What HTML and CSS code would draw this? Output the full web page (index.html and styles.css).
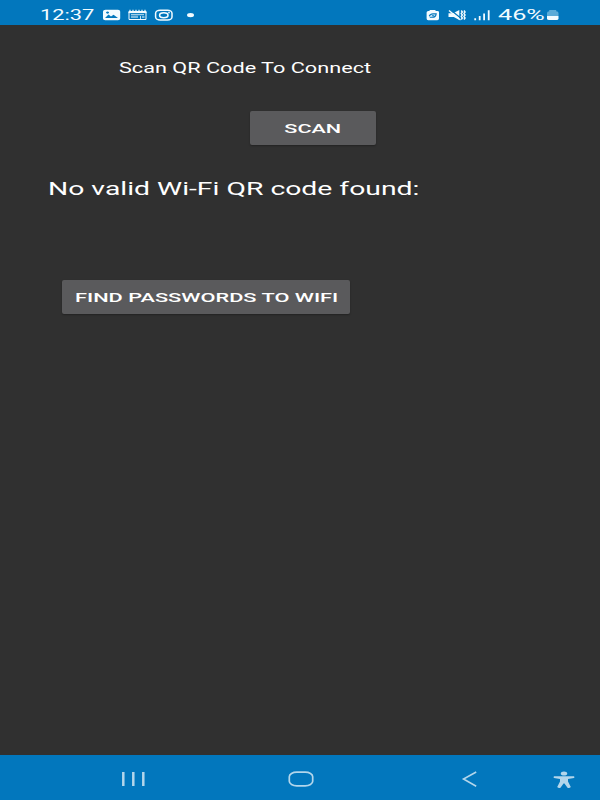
FILE: index.html
```html
<!DOCTYPE html>
<html lang="en">
<head>
<meta charset="utf-8">
<title>Wi-Fi QR Scanner</title>
<link rel="stylesheet" href="styles.css">
</head>
<body>
<div class="screen">
  <header class="status">
    <span class="clock"><span class="wide clock-text">12:37</span></span>
    <svg class="notices" width="100" height="25" viewBox="0 0 100 25" fill="none" stroke="#f2fbff">
      <path fill="#f2fbff" stroke="none" fill-rule="evenodd" d="M5.500 9.800h12.500q2.200 0 2.200 1.600v7.200q0 1.600-2.200 1.600H5.200q-2.200 0-2.200-1.600v-7.200q0-1.600 2.500-1.600zM5 18h13l-4.500-3.200-2.500 1.600-2.500-1.800zM7.500 11.500a1.500 1 0 1 0 .1 0z"/>
      <path d="M29 11.500h17v8H29z" stroke-width="1"/>
      <path d="M28.500 12.300h18" stroke-width="1.600"/>
      <path d="M30 9.800v1.500M33 9.800v1.500M36 9.800v1.500M39 9.800v1.500M42 9.800v1.500M45 9.800v1.500" stroke-width="1.200"/>
      <path d="M31 14.700h13M40.500 16v3.500" stroke-width="1" opacity=".8"/>
      <path d="M31 15.700h7v2.300h-7zM42 16h2.500v2H42z" fill="#f2fbff" stroke="none" opacity=".5"/>
      <rect x="55.600" y="10.300" width="16.400" height="9.700" rx="4.500" ry="3" stroke-width="1.500"/>
      <ellipse cx="63.800" cy="15.200" rx="4.200" ry="2.500" stroke-width="1.600"/>
      <circle cx="69" cy="12.600" r=".9" fill="#f2fbff" stroke="none"/>
      <ellipse cx="90.500" cy="15.100" rx="3.500" ry="2.200" fill="#f2fbff" stroke="none"/>
    </svg>
    <svg class="signals" width="70" height="25" viewBox="0 0 70 25" fill="none" stroke="#f2fbff">
      <path fill="#f2fbff" stroke="none" d="M4 10h5l1 1h1.500q1.500 0 1.500 1.300v6.200q0 1.700-1.700 1.700H2.200Q.6 20.200.6 18.500v-6q0-1.500 1.700-1.500H3.200z"/>
      <path stroke="#0277bd" stroke-width="1.100" d="M3.200 16.300q1-2.400 3.800-2.400h3.200q-.5 3.400-3.700 3.400H3.800M5.800 15.800h2.500"/>
      <path fill="#f2fbff" stroke="none" d="M22.500 13.300h4.500l6.300-3.300v10l-5.500-3h-5.300z"/>
      <path stroke="#0277bd" stroke-width="1.300" d="M25 10.200l10.500 8.500"/>
      <path stroke-width="1.300" d="M23 10.500l11.500 9.500"/>
      <path stroke-width="1.500" d="M35.300 10.500l1 1.500-1 1.500 1 1.500-1 1.500 1 1.500-1 1.500M38 10.500l1 1.500-1 1.500 1 1.500-1 1.500 1 1.500-1 1.500"/>
      <path stroke-width="1.800" d="M49.200 18.200v2M53.700 16v4.200M58.100 13.500v6.700M62.700 10.200v10"/>
    </svg>
    <span class="percent"><span class="wide percent-text">46%</span></span>
    <svg class="battery" width="14" height="25" viewBox="0 0 14 25">
      <path fill="#5babd8" d="M1 16v-3q0-1.800 2.200-1.800V10h7v1.200q2.300 0 2.300 1.800v3z"/>
      <path fill="#f2fbff" d="M1 16h11.500v2.400q0 1.700-2 1.700H3q-2 0-2-1.700z"/>
    </svg>
  </header>
  <main class="content">
    <h1 class="title"><span class="wide title-text">Scan QR Code To Connect</span></h1>
    <button class="btn scan"><span class="wide scan-text">SCAN</span></button>
    <p class="message"><span class="wide message-text">No valid Wi-Fi QR code found:</span></p>
    <button class="btn find"><span class="wide find-text">FIND PASSWORDS TO WIFI</span></button>
  </main>
  <nav class="navbar">
    <svg class="recents" width="26" height="16" viewBox="0 0 26 16"><path d="M3.300 1v14M13.300 1v14M23.300 1v14" stroke="#b3d6eb" stroke-width="2.500"/></svg>
    <svg class="home" width="28" height="18" viewBox="0 0 28 18"><rect x="2.300" y="2.200" width="23.400" height="13.600" rx="7.500" ry="4.500" fill="none" stroke="#b3d6eb" stroke-width="1.700"/></svg>
    <svg class="back" width="18" height="18" viewBox="0 0 18 18"><path d="M15.200 2L2.500 9l12.700 7.200" fill="none" stroke="#b3d6eb" stroke-width="1.600"/></svg>
    <svg class="access" width="24" height="18" viewBox="0 0 24 18" fill="#b3d6eb"><ellipse cx="12" cy="2.500" rx="3.200" ry="2.100"/><path d="M2 5.300h20q1 .9 0 1.800l-6 .9v2.500l2.800 5.500q-1.300 1.500-3.300.7L12.500 12.500h-1l-3 4.200q-2 .8-3.300-.7l2.800-5.500V8L2 7.100q-1-.9 0-1.800z"/></svg>
  </nav>
</div>
</body>
</html>
```
FILE: styles.css
```css
body { margin: 0; font-family: Roboto, "Liberation Sans", sans-serif; }

.screen {
  display: flex;
  flex-direction: column;
  width: 600px;
  height: 800px;
  overflow: hidden;
  background: #303030;
  color: #fff;
}

/* Horizontally expanded lettering */
.wide {
  display: inline-block;
  white-space: nowrap;
  transform-origin: 0 50%;
}

.status {
  display: flex;
  flex: none;
  height: 25px;
  background: #0277bd;
  color: #f2fbff;
  font-size: 14px;
  line-height: 30px;
}
.clock { width: 60px; margin-left: 40px; }
.clock-text { transform: scaleX(1.56); }
.signals { margin-left: 226px; }
.percent { width: 50px; margin-left: 2px; }
.percent-text { transform: scaleX(1.8); }
.battery { margin-left: -2px; }

.content {
  display: flex;
  flex: 1;
  flex-direction: column;
  align-items: flex-start;
}
.title {
  margin: 33px 0 0 119px;
  font-size: 14px;
  font-weight: 400;
  line-height: 20px;
}
.title-text { transform: scaleX(1.548); }
.message {
  margin: 32px 0 0 48px;
  font-size: 18px;
  line-height: 24px;
}
.message-text { transform: scaleX(1.573); }

.btn {
  display: flex;
  align-items: center;
  justify-content: center;
  height: 34px;
  padding: 0;
  border: 0;
  border-radius: 2px;
  background: #5a5a5c;
  box-shadow: 0 1px 2px rgba(0, 0, 0, .3);
  color: #fff;
  font: 500 13.5px/34px Roboto, "Liberation Sans", sans-serif;
}
.btn .wide { transform-origin: 50% 50%; }
.scan { width: 126px; margin: 33px 0 0 250px; }
.scan-text { transform: scaleX(1.6); }
.find { width: 288px; margin: 79px 0 0 62px; }
.find-text { transform: translateX(1px) scaleX(1.612); }

.navbar {
  display: flex;
  flex: none;
  align-items: flex-start;
  height: 45px;
  background: #0277bd;
}
.recents { margin: 16px 0 0 120px; }
.home { margin: 15px 0 0 141px; }
.back { margin: 15px 0 0 146px; }
.access { margin: 16px 0 0 73px; }
```
